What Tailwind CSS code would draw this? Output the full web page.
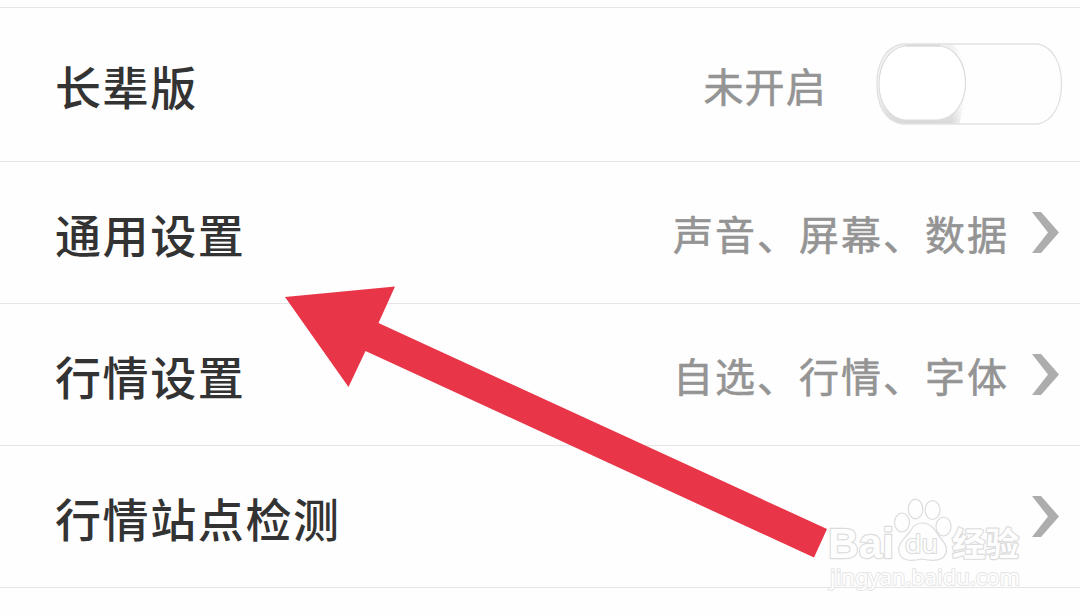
<!DOCTYPE html>
<html lang="zh-CN">
<head>
    <meta charset="UTF-8">
    <meta name="viewport" content="width=device-width, initial-scale=1.0">
    <title>设置</title>
    <script src="https://cdn.jsdelivr.net/npm/@tailwindcss/browser@4"></script>
</head>
<body class="relative w-[1080px] h-[614px] overflow-hidden bg-[#fefefe] font-['Noto_Sans_CJK_SC',sans-serif]">
    <!-- 设置列表 -->
    <div class="mt-[7px] border-y border-[#e6e6e6] divide-y divide-[#e6e6e6]">
        <div class="flex items-center justify-between h-[154px] pl-[55px] pr-[17px]">
            <span class="text-[46px] leading-[60px] tracking-[1.6px] font-medium text-[#333] pt-px">长辈版</span>
            <div class="flex items-center">
                <span class="text-[40px] leading-[60px] tracking-[1.2px] text-[#949494] [-webkit-text-stroke:0.6px_#949494] mr-[48px] pt-px">未开启</span>
                <!-- 开关 -->
                <svg class="w-[188px] h-[84px]" viewBox="875 43 188 84" fill="none">
                    <defs>
                        <linearGradient id="shade" x1="0" y1="0" x2="0" y2="1">
                            <stop offset="0" stop-color="#f0f0f0" />
                            <stop offset="0.5" stop-color="#fbfbfb" />
                            <stop offset="1" stop-color="#d8d8d8" />
                        </linearGradient>
                        <linearGradient id="fade" x1="0" y1="0" x2="1" y2="0">
                            <stop offset="0.84" stop-color="#fefefe" stop-opacity="0" />
                            <stop offset="1" stop-color="#fefefe" />
                        </linearGradient>
                    </defs>
                    <path d="M902 44H951Q966 53 966 83Q964 107 959 124H902C885 121 877 106 877 84C877 62 887 47 902 44Z" fill="url(#shade)" />
                    <path d="M902 44H951Q966 53 966 83Q964 107 959 124H902C885 121 877 106 877 84C877 62 887 47 902 44Z" fill="url(#fade)" />
                    <path d="M902 44H1038C1053 47 1061.500 63 1061.500 84C1061.500 105 1053 121 1038 124H902C885 121 877 106 877 84C877 62 886 47 902 44Z" stroke="#e2e2e2" stroke-width="1.400" />
                    <path d="M904 46H941C957 49 965.500 65 965.500 83C965.500 101 956 118 938 120H904C889 118 879 103 879 84C879 64 889 49 904 46Z" fill="#fff" stroke="#dadada" stroke-width="1.100" />
                    <path d="M906 45.500H940M905 121.500H937" stroke="#d8d8d8" stroke-width="1.500" />
                </svg>
            </div>
        </div>
        <div class="flex items-center justify-between h-[142px] pl-[55px] pr-[20px]">
            <span class="text-[46px] leading-[60px] tracking-[1.6px] font-medium text-[#333] pt-px">通用设置</span>
            <div class="flex items-center">
                <span class="text-[40px] leading-[60px] tracking-[2px] text-[#949494] [-webkit-text-stroke:0.6px_#949494] mr-[23px] pt-px">声音、屏幕、数据</span>
                <svg class="w-[28px] h-[42px]" viewBox="0 0 28 42"><path d="M0 0H9L27 20.500L9 41H0L16 20.500Z" fill="#adadad" /></svg>
            </div>
        </div>
        <div class="flex items-center justify-between h-[142px] pl-[55px] pr-[20px]">
            <span class="text-[46px] leading-[60px] tracking-[1.6px] font-medium text-[#333] pt-px">行情设置</span>
            <div class="flex items-center">
                <span class="text-[40px] leading-[60px] tracking-[2px] text-[#949494] [-webkit-text-stroke:0.6px_#949494] mr-[23px] pt-px">自选、行情、字体</span>
                <svg class="w-[28px] h-[42px]" viewBox="0 0 28 42"><path d="M0 0H9L27 20.500L9 41H0L16 20.500Z" fill="#adadad" /></svg>
            </div>
        </div>
        <div class="flex items-center justify-between h-[141px] pl-[55px] pr-[20px]">
            <span class="text-[46px] leading-[60px] tracking-[1.6px] font-medium text-[#333] pt-px">行情站点检测</span>
            <svg class="w-[28px] h-[42px]" viewBox="0 0 28 42"><path d="M0 0H9L27 20.500L9 41H0L16 20.500Z" fill="#adadad" /></svg>
        </div>
    </div>

    <!-- 箭头和水印 -->
    <svg class="absolute inset-0 w-[1080px] h-[614px] pointer-events-none" viewBox="0 0 1080 614">
        <path d="M285 297L395 286.500L378.500 323L827 529L814 557.500L365.500 351L348.500 387Z" fill="#e93548" />
        <g fill="#fefefe" stroke="#dcdcdc" stroke-width="1.200" stroke-linejoin="round">
            <text x="828" y="558" font-family="Liberation Sans" font-weight="700" font-size="43" textLength="66" lengthAdjust="spacingAndGlyphs" paint-order="stroke" stroke-width="2.400">Bai</text>
            <ellipse cx="902" cy="522.500" rx="7.500" ry="9.500" />
            <ellipse cx="915.500" cy="509" rx="7.300" ry="9.800" />
            <ellipse cx="932.500" cy="510" rx="7.500" ry="9.500" />
            <ellipse cx="943.500" cy="526.500" rx="7.500" ry="9.500" />
            <path d="M922 523C931 523 935 530 939 536C944 542 948 547 946 553C943 562 931 561 922 559C912 561 901 562 899 552C897 545 903 540 908 534C912 529 914 523 922 523Z" />
            <text x="905" y="553" font-family="Open Sans" font-size="26" textLength="33" lengthAdjust="spacingAndGlyphs" paint-order="stroke" stroke-width="2.200">du</text>
            <text x="952" y="555.500" font-family="Noto Sans CJK SC" font-weight="700" font-size="33" textLength="67" lengthAdjust="spacingAndGlyphs" paint-order="stroke" stroke-width="2.400">经验</text>
            <text x="830" y="585" font-family="Noto Sans" font-size="22" textLength="190" lengthAdjust="spacingAndGlyphs" paint-order="stroke" stroke="#e6e6e6" stroke-width="2">jingyan.baidu.com</text>
        </g>
    </svg>
</body>
</html>
